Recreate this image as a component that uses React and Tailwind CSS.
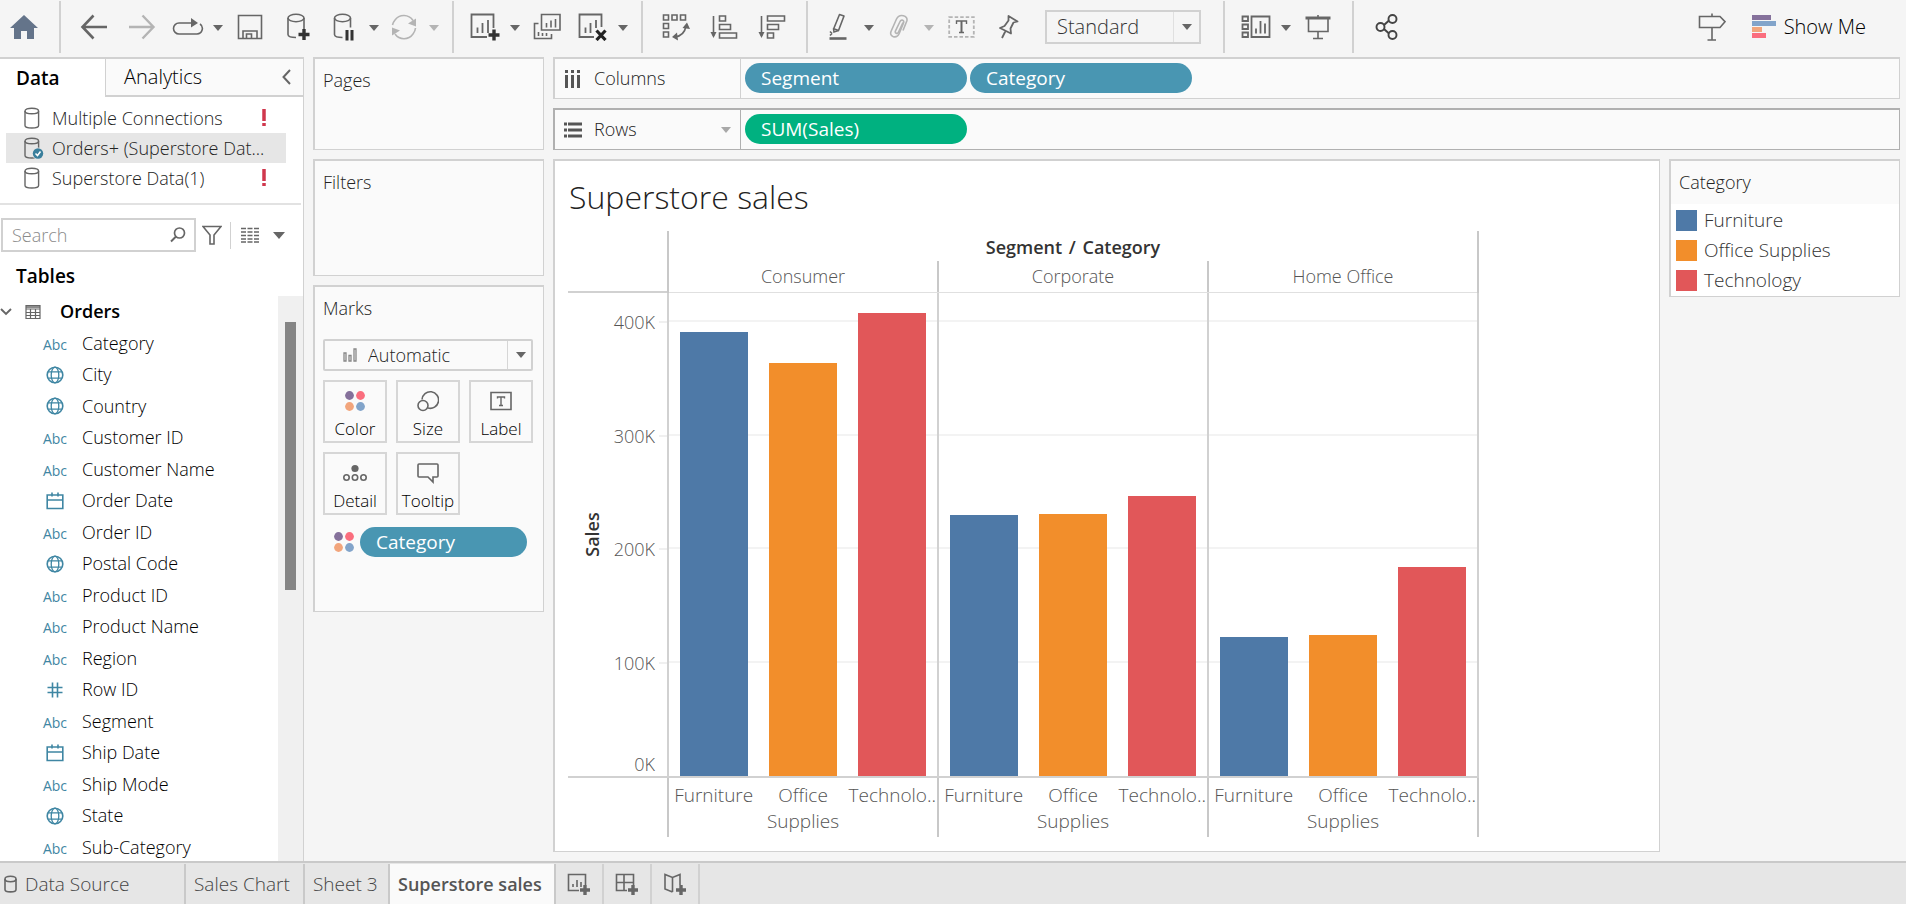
import React, { useState } from 'react'

const connections = [
  { name: 'Multiple Connections', error: true },
  { name: 'Orders+ (Superstore Dat...', active: true },
  { name: 'Superstore Data(1)', error: true },
]

const fields = [
  ['text', 'Category'],
  ['geo', 'City'],
  ['geo', 'Country'],
  ['text', 'Customer ID'],
  ['text', 'Customer Name'],
  ['date', 'Order Date'],
  ['text', 'Order ID'],
  ['geo', 'Postal Code'],
  ['text', 'Product ID'],
  ['text', 'Product Name'],
  ['text', 'Region'],
  ['number', 'Row ID'],
  ['text', 'Segment'],
  ['date', 'Ship Date'],
  ['text', 'Ship Mode'],
  ['geo', 'State'],
  ['text', 'Sub-Category'],
]

const categories = [
  { name: 'Furniture', axis: 'Furniture', color: 'bg-[#4e79a7]' },
  { name: 'Office Supplies', axis: 'Office Supplies', color: 'bg-[#f28e2b]' },
  { name: 'Technology', axis: 'Technolo..', color: 'bg-[#e15759]' },
]

// sales in thousands, same order as categories
const segments = [
  { name: 'Consumer', sales: [392, 364, 408] },
  { name: 'Corporate', sales: [230, 231, 247] },
  { name: 'Home Office', sales: [123, 124, 184] },
]

const AXIS_MAX = 426
const ticks = [400, 300, 200, 100]

const pct = (value) => `${(value / AXIS_MAX) * 100}%`

const Icon = ({ w = 28, h = 28, className = '', children }) => (
  <svg
    width={w}
    height={h}
    viewBox={`0 0 ${w} ${h}`}
    fill="none"
    stroke="currentColor"
    strokeWidth="1.6"
    className={`shrink-0 ${className}`}
    aria-hidden="true"
  >
    {children}
  </svg>
)

const Caret = ({ className = 'text-[#666]' }) => (
  <Icon w={10} h={6} className={className}>
    <path d="M0 0h10L5 6z" fill="currentColor" stroke="none" />
  </Icon>
)

const Plus = ({ x, y }) => (
  <path d={`M${x} ${y - 5.5}v11M${x - 5.5} ${y}h11`} stroke="#333" strokeWidth="3.4" />
)

const Database = ({ checked }) => (
  <Icon w={20} h={22} className="text-[#666]">
    <path d="M1 4v14.5c0 1.4 3 2.5 6.800 2.500s6.800-1.100 6.800-2.500V4" strokeWidth="1.400" />
    <ellipse cx="7.800" cy="4" rx="6.800" ry="2.800" strokeWidth="1.400" />
    {checked && (
      <>
        <circle cx="14" cy="16.500" r="6" fill="#e6e6e6" stroke="none" />
        <circle cx="14" cy="16.500" r="5.200" fill="#3a7f9c" stroke="none" />
        <path d="M11.500 16.500l2 2 3-4" stroke="#fff" strokeWidth="1.500" />
      </>
    )}
  </Icon>
)

const ColorDots = () => (
  <Icon w={20} h={20}>
    <g stroke="none">
      <circle cx="4.500" cy="4.500" r="4.400" fill="#85719b" />
      <circle cx="15.500" cy="4.500" r="4.400" fill="#fa6e7e" />
      <circle cx="4.500" cy="15.500" r="4.400" fill="#f2a57c" />
      <circle cx="15.500" cy="15.500" r="4.400" fill="#82a4ca" />
    </g>
  </Icon>
)

const Tool = ({ label, narrow, disabled, children }) => (
  <button
    type="button"
    aria-label={label}
    disabled={disabled}
    className={`flex h-full items-center justify-center ${narrow ? 'w-11' : 'w-12'} ${
      disabled ? 'text-[#b4b4b4]' : 'text-[#666]'
    }`}
  >
    {children}
  </button>
)

const Drop = ({ label, disabled }) => (
  <button type="button" aria-label={label} disabled={disabled} className="flex h-full w-4 items-center justify-center pt-[2px]">
    <Caret className={disabled ? 'text-[#b4b4b4]' : 'text-[#666]'} />
  </button>
)

const Group = ({ children, last }) => (
  <div className={`flex h-[52px] items-center pl-[9px] ${last ? '' : 'border-r-2 border-[#d1d1d1] pr-[10px]'}`}>
    {children}
  </div>
)

const Toolbar = () => (
  <header className="flex h-[57px] shrink-0 items-center bg-[#f5f5f5] pb-[3px]">
    <div className="flex h-[52px] items-center border-r-2 border-[#d1d1d1] pr-[11px]">
      <Tool label="Home">
        <Icon w={28} h={24}>
          <path d="M14 0L0 13h4v11h7v-8h6v8h7V13h4z" fill="#64748a" stroke="none" />
        </Icon>
      </Tool>
    </div>

    <Group>
      <Tool label="Undo">
        <Icon w={28} h={26}>
          <path d="M27 13H2.500M13.500 1.500L2.500 13l11 11.500" strokeWidth="2.600" />
        </Icon>
      </Tool>
      <Tool label="Redo" disabled>
        <Icon w={28} h={26}>
          <path d="M1 13h24.500M14.500 1.500l11 11.500-11 11.500" strokeWidth="2.400" />
        </Icon>
      </Tool>
      <Tool label="Replay" narrow>
        <Icon w={32} h={18}>
          <path d="M20 5H7a5.500 5.500 0 0 0 0 11h18a5.500 5.500 0 0 0 3-10" />
          <path d="M19 0l7 5-7 4.500z" fill="currentColor" stroke="none" />
        </Icon>
      </Tool>
      <Drop label="Replay options" />
      <Tool label="Save">
        <Icon w={26} h={26}>
          <path d="M1.500 1.500h23v23h-23zM6 24.500V17h14v7.500M9.500 24.500V20h5v4.500" />
        </Icon>
      </Tool>
      <Tool label="New data source">
        <Icon w={24} h={28}>
          <path d="M10 24.500c-5 0-8-1-8-3V5M18 5v11" />
          <ellipse cx="10" cy="5" rx="8" ry="3.700" />
          <Plus x={18} y={21.5} />
        </Icon>
      </Tool>
      <Tool label="Pause updates" narrow>
        <Icon w={22} h={28}>
          <path d="M9.500 24.500c-5 0-8-1-8-3V5M17.500 5v9.500" />
          <ellipse cx="9.500" cy="5" rx="8" ry="3.700" />
          <path d="M14 17v10.500M19 17v10.500" stroke="#333" strokeWidth="3" />
        </Icon>
      </Tool>
      <Drop label="Pause options" />
      <Tool label="Refresh" narrow disabled>
        <Icon w={28} h={26}>
          <path d="M5 6a11 11 0 0 1 18 0.500M23 20a11 11 0 0 1-18 0M2.500 11a12 12 0 0 1 2.500-5M25.500 14a11 11 0 0 1-2.500 6" />
          <path d="M18 9.500l8-5v8zM10 16.500l-8 5v-8z" fill="currentColor" stroke="none" />
        </Icon>
      </Tool>
      <Drop label="Refresh options" disabled />
    </Group>

    <Group>
      <Tool label="New worksheet" narrow>
        <Icon w={30} h={28}>
          <path d="M17 24H1.500V1.500h22V15M7.500 14.500V20M12.500 10v10M18 7v13" strokeWidth="1.800" />
          <Plus x={24} y={22} />
        </Icon>
      </Tool>
      <Drop label="New worksheet options" />
      <Tool label="Duplicate sheet">
        <Icon w={28} h={28}>
          <path d="M8.500 1.500h18.500v15.500H8.500zM5.500 10.500H1.500v15h17v-4.500M13.500 10v4.500M18 7.500v7M22.500 6v8.500M5.500 19v4M9.500 20v3M13.500 20v3" />
        </Icon>
      </Tool>
      <Tool label="Clear sheet" narrow>
        <Icon w={30} h={28}>
          <path d="M16 24H1.500V1.500h22V14M7.500 14.500V20M12.500 10v10M18 7v8" strokeWidth="1.800" />
          <path d="M18.500 17.500l9 9.500M27.500 17.500l-9 9.500" stroke="#222" strokeWidth="3.200" />
        </Icon>
      </Tool>
      <Drop label="Clear options" />
    </Group>

    <Group>
      <Tool label="Swap rows and columns">
        <Icon w={28} h={28}>
          <path d="M1.500 2h5v5h-5zM10 2h5v5h-5zM18.500 2h5v5h-5zM1.500 10.500h5v5h-5zM1.500 19h5v5h-5zM13 24c6.500-1 10-5 11-11" />
          <path d="M20.500 15l4.500-5.500 3 6.500zM15 19.500L10 24l6 3.500z" fill="currentColor" stroke="none" />
        </Icon>
      </Tool>
      <Tool label="Sort ascending">
        <Icon w={28} h={26}>
          <path d="M3.500 2v20M9.500 2h6v5h-6zM9.500 10.500h11v5h-11zM9.500 19h17v5h-17z" />
          <path d="M0.500 18h6l-3 6z" fill="currentColor" stroke="none" />
        </Icon>
      </Tool>
      <Tool label="Sort descending">
        <Icon w={28} h={26}>
          <path d="M3.500 2v20M9.500 2h17v5h-17zM9.500 10.500h11v5h-11zM9.500 19h6v5h-6z" />
          <path d="M0.500 18h6l-3 6z" fill="currentColor" stroke="none" />
        </Icon>
      </Tool>
    </Group>

    <Group>
      <Tool label="Highlight" narrow>
        <Icon w={20} h={28}>
          <path d="M10.500 1.500l4.500 1.500-5.500 14.500-4.800-1.800z" strokeLinejoin="round" />
          <path d="M4.500 15.500l0.500 3.500 4.500-1.500M1 18.500l2 2M1 22.500l2-2" />
          <path d="M0.500 25.500h17" strokeWidth="2.600" />
        </Icon>
      </Tool>
      <Drop label="Highlight options" />
      <Tool label="Group members" narrow disabled>
        <Icon w={20} h={26}>
          <path d="M14 8.500l-4.500 9.500c-1.200 2.500-4 1.200-3-1.200L10.800 8c1.700-3.500 5-1.500 3.500 1.500M14.300 9.500L10 20c-2.500 5-10 3-8-2.500L7.500 5c3-6 12-3.500 10.300 2L14 16.500" />
        </Icon>
      </Tool>
      <Drop label="Group options" disabled />
      <Tool label="Show mark labels">
        <Icon w={27} h={22}>
          <path d="M1.200 1.200h24.600v19.600H1.200z" stroke="#b4b4b4" strokeWidth="1.800" strokeDasharray="3.500 2" />
          <path d="M8.500 8V5h10v3M11 16.500h5" strokeWidth="1.400" />
          <path d="M13.500 5v12" strokeWidth="2" />
        </Icon>
      </Tool>
      <Tool label="Fix axes">
        <Icon w={22} h={26}>
          <path d="M10.500 2l9 5.500-4 1-3 6 0.500 5L2 14l4.500-2 4-5.500zM7.500 17L4 24" strokeWidth="1.800" strokeLinejoin="round" />
        </Icon>
      </Tool>
      <div className="relative mr-3 ml-3">
        <select
          aria-label="Fit"
          defaultValue="Standard"
          className="h-[34px] w-[156px] appearance-none border-2 border-[#d1d1d1] bg-[#f5f5f5] pl-[10px] text-[20px] text-[#333]"
        >
          <option>Standard</option>
          <option>Fit Width</option>
          <option>Fit Height</option>
          <option>Entire View</option>
        </select>
        <div className="pointer-events-none absolute inset-y-[2px] right-[2px] flex w-[26px] items-center justify-center border-l border-[#e0e0e0]">
          <Caret />
        </div>
      </div>
    </Group>

    <Group>
      <Tool label="Show or hide cards" narrow>
        <Icon w={30} h={24}>
          <path d="M1.500 1.500h5.500v4.500H1.500zM1.500 9.500h5.500v4.500H1.500zM1.500 17.500h5.500v4.500H1.500zM10.500 1.500h18v20.500h-18zM15 13.500v5M19.500 6v12.500M24 8.500v10" strokeWidth="1.800" />
        </Icon>
      </Tool>
      <Drop label="Card options" />
      <Tool label="Presentation mode">
        <Icon w={26} h={26}>
          <path d="M0.500 4h25" strokeWidth="3" />
          <path d="M3.500 5v12.500h19.500V5M13 1v2M13 17.500V24M8 24.500h10" />
        </Icon>
      </Tool>
    </Group>

    <Group last>
      <Tool label="Share">
        <Icon w={24} h={26} className="text-[#444]">
          <path d="M9 11l5-4.500M9 15l5 4.500" strokeWidth="2" />
          <circle cx="5.500" cy="13" r="4" strokeWidth="1.900" />
          <circle cx="17.500" cy="5" r="4" strokeWidth="1.900" />
          <circle cx="17.500" cy="21" r="4" strokeWidth="1.900" />
        </Icon>
      </Tool>
    </Group>

    <div className="ml-auto flex h-full items-center pr-10">
      <Tool label="Guide">
        <Icon w={28} h={28}>
          <path d="M1.500 3.500h20.500l5 5.200-5 5.800H1.500zM14 0.500v3M14 14.500V27M9.500 27h8.500" />
        </Icon>
      </Tool>
      <button type="button" className="flex items-center gap-2 pl-4 text-[20px] text-black">
        <Icon w={24} h={24}>
          <g stroke="none">
            <path d="M0 0h19v5H0z" fill="#85719b" />
            <path d="M0 6h24v5H0z" fill="#82a4ca" />
            <path d="M0 12h10v5H0z" fill="#f2a57c" />
            <path d="M0 18h14v5H0z" fill="#fa6e7e" />
          </g>
        </Icon>
        Show Me
      </button>
    </div>
  </header>
)

const FieldIcon = ({ type }) => {
  if (type === 'text') return <span className="pt-[2px] text-[14px] font-medium">Abc</span>
  if (type === 'geo') {
    return (
      <Icon w={18} h={18}>
        <circle cx="9" cy="9" r="7.800" />
        <ellipse cx="9" cy="9" rx="3.800" ry="7.800" strokeWidth="1.300" />
        <path d="M2 5.800h14M2 12.200h14" strokeWidth="1.300" />
      </Icon>
    )
  }
  if (type === 'date') {
    return (
      <Icon w={18} h={18}>
        <path d="M1.200 3h15.600v13.500H1.200zM1.200 8h15.600M6 0.500v4M12 0.500v4" />
      </Icon>
    )
  }
  return (
    <Icon w={18} h={18}>
      <path d="M6.500 1.500v15M11.500 1.500v15M1.500 6.500h15M1.500 11.500h15" />
    </Icon>
  )
}

const DataPane = () => {
  const [search, setSearch] = useState('')

  return (
    <aside className="flex w-[304px] shrink-0 flex-col border-t-2 border-r border-[#d1d1d1] bg-white">
      <div className="flex h-[38px] shrink-0">
        <button type="button" className="w-[105px] pl-4 text-left text-[19px] font-semibold text-black">
          Data
        </button>
        <div className="flex flex-1 items-center justify-between border-b-2 border-l border-[#d1d1d1] bg-[#fafafa] pr-3 pl-[18px]">
          <button type="button" className="text-[20px] text-black">Analytics</button>
          <button type="button" aria-label="Collapse pane" className="text-[#666]">
            <Icon w={9} h={16}>
              <path d="M8 1L1.500 8 8 15" strokeWidth="2" />
            </Icon>
          </button>
        </div>
      </div>

      <ul className="mr-[17px] ml-[6px] shrink-0 py-[6px] text-[18px] leading-[30px] text-[#222]">
        {connections.map((c) => (
          <li key={c.name} className={`flex items-center pl-[18px] whitespace-nowrap ${c.active ? 'bg-[#e6e6e6]' : ''}`}>
            <Database checked={c.active} />
            <span className="ml-2">{c.name}</span>
            {c.error && (
              <Icon w={4} h={18} className="mr-5 ml-auto text-[#d0374d]">
                <path d="M2 0v12M2 14v3" strokeWidth="3.500" />
              </Icon>
            )}
          </li>
        ))}
      </ul>

      <div className="mt-1 mr-[2px] border-t-2 border-[#e2e2e2]" />

      <div className="mt-[13px] flex h-[34px] shrink-0 items-center pl-px">
        <div className="flex h-full w-[195px] items-center border-2 border-[#d1d1d1] pr-2 pl-[9px]">
          <input
            type="text"
            aria-label="Search"
            placeholder="Search"
            value={search}
            onChange={(e) => setSearch(e.target.value)}
            className="min-w-0 flex-1 text-[18px] outline-none placeholder:text-[#8a8a8a]"
          />
          <Icon w={16} h={16} className="text-[#666]">
            <circle cx="9.500" cy="6" r="5" strokeWidth="1.700" />
            <path d="M6 9.500L1 14.500" strokeWidth="1.900" />
          </Icon>
        </div>
        <button type="button" aria-label="Filter fields" className="mr-2 ml-[6px] text-[#666]">
          <Icon w={20} h={20}>
            <path d="M1 1.500h18l-7 8.500v9H8V10z" />
          </Icon>
        </button>
        <button type="button" aria-label="View options" className="flex h-[27px] items-center gap-[14px] border-l border-[#d1d1d1] pl-[10px] text-[#666]">
          <Icon w={18} h={16}>
            <path d="M0 1.500h18M0 5h18M0 8.500h18M0 12h18M0 15h18" strokeWidth="1.600" strokeDasharray="5 1.500" />
          </Icon>
          <Icon w={12} h={7}>
            <path d="M0 0h12L6 7z" fill="currentColor" stroke="none" />
          </Icon>
        </button>
      </div>

      <h2 className="mt-[11px] h-[33px] shrink-0 pl-4 text-[19px] leading-[26px] font-semibold text-black">Tables</h2>

      <div className="flex min-h-0 flex-1 overflow-hidden">
        <div className="flex-1">
          <div className="flex h-[31px] items-center text-[18px] font-semibold text-black">
            <Icon w={12} h={8} className="text-[#666]">
              <path d="M1 1l5 5 5-5" strokeWidth="1.900" />
            </Icon>
            <Icon w={16} h={16} className="mr-[19px] ml-[13px] text-[#666]">
              <path d="M1 1.500h14v13H1zM1 5h14M1 8.500h14M1 11.500h14M5.500 5v9.500M10.500 5v9.500" strokeWidth="1.200" />
              <path d="M1 3h14" strokeWidth="1.500" />
            </Icon>
            Orders
          </div>
          <ul>
            {fields.map(([type, name]) => (
              <li key={name} className="flex h-8 items-center pl-[43px] text-[18px] text-black even:h-[31px]">
                <span className="flex w-6 justify-center text-[#3f86a3]">
                  <FieldIcon type={type} />
                </span>
                <span className="pl-[15px]">{name}</span>
              </li>
            ))}
          </ul>
        </div>
        <div className="w-[25px] bg-[#f0f0f0]">
          <div className="mx-[7px] mt-[26px] h-[268px] bg-[#858585]" />
        </div>
      </div>
    </aside>
  )
}

const Card = ({ title, className = '', children }) => (
  <section className={`border border-t-2 border-l-2 border-[#d1d1d1] bg-[#fafafa] px-2 ${className}`}>
    <h2 className="pt-2 text-[18px] leading-[26px] text-[#222]">{title}</h2>
    {children}
  </section>
)

const MarkButton = ({ label, children }) => (
  <button
    type="button"
    className="flex h-[63px] flex-col items-center justify-between border-2 border-[#d6d6d6] pt-2 text-[17px] leading-[25px] text-black"
  >
    <span className="flex h-[22px] items-center text-[#666]">{children}</span>
    {label}
  </button>
)

const Cards = () => (
  <div className="flex w-[231px] shrink-0 flex-col gap-[9px]">
    <Card title="Pages" className="h-[93px]" />
    <Card title="Filters" className="h-[117px]" />
    <Card title="Marks" className="h-[327px]">
      <div className="relative mt-[18px]">
        <select
          aria-label="Mark type"
          className="h-8 w-[210px] appearance-none rounded-xs border-2 border-[#d1d1d1] bg-[#fafafa] pl-[43px] text-[18px] text-[#222]"
        >
          <option>Automatic</option>
          <option>Bar</option>
          <option>Line</option>
        </select>
        <div className="pointer-events-none absolute inset-y-0 left-5 flex items-center text-[#888]">
          <Icon w={14} h={14}>
            <path d="M1 5h2v8H1zM6 7.500h2V13H6zM11 1h2v12h-2z" strokeWidth="1.300" />
          </Icon>
        </div>
        <div className="pointer-events-none absolute inset-y-[2px] right-[2px] flex w-[26px] items-center justify-center border-l border-[#d6d6d6]">
          <Caret />
        </div>
      </div>
      <div className="mt-[9px] grid w-[210px] grid-cols-3 gap-[9px]">
        <MarkButton label="Color">
          <ColorDots />
        </MarkButton>
        <MarkButton label="Size">
          <Icon w={22} h={22}>
            <path d="M5 9.500a8.300 8.300 0 1 1 6 8.500" />
            <circle cx="6" cy="15.500" r="5" />
          </Icon>
        </MarkButton>
        <MarkButton label="Label">
          <Icon w={22} h={20}>
            <path d="M1 1.500h20v17H1z" />
            <path d="M7.500 7.500V6h7v1.500M11 6v8M9 14.500h4" strokeWidth="1.400" />
          </Icon>
        </MarkButton>
        <MarkButton label="Detail">
          <Icon w={24} h={18}>
            <circle cx="12" cy="4.500" r="3.600" fill="currentColor" stroke="none" />
            <circle cx="3.500" cy="13.500" r="2.700" />
            <circle cx="12" cy="13.500" r="2.700" />
            <circle cx="20.500" cy="13.500" r="2.700" />
          </Icon>
        </MarkButton>
        <MarkButton label="Tooltip">
          <Icon w={22} h={22}>
            <path d="M2 2h18a1 1 0 0 1 1 1v11a1 1 0 0 1-1 1h-4v5l-5-5H2a1 1 0 0 1-1-1V3a1 1 0 0 1 1-1z" />
          </Icon>
        </MarkButton>
      </div>
      <div className="mt-3 flex items-center gap-[6px] pl-[11px]">
        <ColorDots />
        <Pill label="Category" className="w-[167px] bg-[#4996b2]" />
      </div>
    </Card>
  </div>
)

const Pill = ({ label, className }) => (
  <button type="button" className={`h-[30px] rounded-full px-4 text-left text-[19px] leading-[28px] font-medium text-white ${className}`}>
    {label}
  </button>
)

const Shelf = ({ label, icon, active, children }) => (
  <div className={`flex h-[42px] border border-t-2 border-l-2 bg-[#fafafa] ${active ? 'border-[#b0b0b0]' : 'border-[#d1d1d1]'}`}>
    <div className={`flex w-[186px] items-center gap-3 border-r pl-[9px] text-[18px] text-[#222] ${active ? 'border-[#b0b0b0]' : 'border-[#d1d1d1]'}`}>
      {icon}
      {label}
      {active && (
        <span className="mr-[9px] ml-auto">
          <Caret className="text-[#a8a8a8]" />
        </span>
      )}
    </div>
    <div className="flex items-start gap-[3px] pt-1 pl-1">{children}</div>
  </div>
)

const Chart = () => (
  <section className="flex min-w-0 flex-1 flex-col border border-t-2 border-l-2 border-[#d1d1d1] bg-white pl-[13px]">
    <h1 className="h-[70px] shrink-0 pt-4 pl-px text-[32px] leading-[40px] font-light text-[#222]">Superstore sales</h1>

    <div className="flex shrink-0">
      <div className="w-[99px] border-b-2 border-[#d1d1d1]" />
      <div className="border-x-2 border-[#c8c8c8] text-center">
        <div className="h-[30px] text-[18px] leading-[32px] font-semibold text-[#333]">
          Segment <span className="mx-[2px]">/</span> Category
        </div>
        <div className="flex divide-x-2 divide-[#c8c8c8] border-b border-[#e0e0e0] text-[18px] leading-[31px] text-[#555]">
          {segments.map((s) => (
            <div key={s.name} className="w-[268px] shrink-0 box-content">{s.name}</div>
          ))}
        </div>
      </div>
    </div>

    <div className="flex min-h-0 flex-1">
      <div className="flex w-[99px] border-b-2 border-[#d1d1d1]">
        <div className="flex w-12 items-center justify-center">
          <span className="-rotate-90 text-[18px] font-semibold text-[#333]">Sales</span>
        </div>
        <div className="relative flex-1 text-right text-[18px] leading-[24px] text-[#555]">
          {ticks.map((t) => (
            <div key={t} className="absolute right-0 flex translate-y-1/2 items-center gap-1" style={{ bottom: pct(t) }}>
              {t}K
              <span className="h-[2px] w-2 bg-[#f0f0f0]" />
            </div>
          ))}
          <div className="absolute right-3 bottom-0">0K</div>
        </div>
      </div>
      <div className="flex divide-x-2 divide-[#d1d1d1] border-x-2 border-b-2 border-[#d1d1d1]">
        {segments.map((s) => (
          <div key={s.name} className="relative box-content flex w-[268px] items-end">
            {ticks.map((t) => (
              <div key={t} className="absolute inset-x-0 border-t-2 border-[#f3f3f3]" style={{ bottom: pct(t) }} />
            ))}
            {s.sales.map((value, i) => (
              <div key={categories[i].name} className="relative flex h-full flex-1 items-end justify-center">
                <div className={`w-[68px] ${categories[i].color}`} style={{ height: pct(value) }} />
              </div>
            ))}
          </div>
        ))}
      </div>
    </div>

    <div className="mb-[14px] flex h-[59px] shrink-0 pl-[99px]">
      <div className="flex divide-x-2 divide-[#c8c8c8] border-x-2 border-[#c8c8c8]">
        {segments.map((s) => (
          <div key={s.name} className="box-content flex w-[268px] pt-1 text-center text-[19px] leading-[26px] text-[#555]">
            {categories.map((c) => (
              <div key={c.name} className="w-0 flex-1">{c.axis}</div>
            ))}
          </div>
        ))}
      </div>
    </div>
  </section>
)

const Legend = () => (
  <section className="w-[231px] shrink-0 self-start border border-t-2 border-l-2 border-[#d1d1d1] bg-white">
    <h2 className="bg-[#fafafa] py-2 pl-2 text-[18px] leading-[27px] text-[#222]">Category</h2>
    <ul className="pt-px pb-px pl-[5px] text-[19px] leading-[30px] text-[#333]">
      {categories.map((c) => (
        <li key={c.name} className="flex items-center gap-[7px]">
          <span className={`size-[21px] ${c.color}`} />
          {c.name}
        </li>
      ))}
    </ul>
  </section>
)

const sheetTab = 'flex items-center border-r-2 border-[#c9c9c9] px-2 whitespace-nowrap'

const SheetTabs = () => (
  <footer className="flex h-[43px] shrink-0 border-t-2 border-[#c9c9c9] bg-[#e6e6e6] pt-px text-[19px] text-[#444]">
    <button type="button" className="flex w-[186px] items-center gap-2 border-r-2 border-[#c9c9c9] pl-1">
      <Icon w={13} h={18} className="text-[#666]">
        <path d="M1 4v10.500c0 1.400 2.500 2.400 5.500 2.400s5.500-1 5.500-2.400V4" />
        <ellipse cx="6.500" cy="4" rx="5.500" ry="2.700" />
      </Icon>
      Data Source
    </button>
    <button type="button" className={`${sheetTab} w-[119px]`}>Sales Chart</button>
    <button type="button" className={`${sheetTab} w-[85px]`}>Sheet 3</button>
    <button type="button" className={`${sheetTab} w-[166px] bg-[#fafafa] text-[18px] font-semibold text-[#555]`}>
      Superstore sales
    </button>
    <button type="button" aria-label="New worksheet" className="flex w-12 items-center justify-center border-r-2 border-[#d1d1d1] text-[#666]">
      <Icon w={24} h={22}>
        <path d="M12 17.500H1.500V1.500h17V12M6 11v3M10 7v7M14 9v5" />
        <path d="M18 12v10M13 17h10" strokeWidth="3.400" />
      </Icon>
    </button>
    <button type="button" aria-label="New dashboard" className="flex w-12 items-center justify-center border-r-2 border-[#d1d1d1] text-[#666]">
      <Icon w={24} h={22}>
        <path d="M12 17.500H1.500V1.500h17V12M1.500 9.500h17M9 1.500v16" />
        <path d="M18 12v10M13 17h10" strokeWidth="3.400" />
      </Icon>
    </button>
    <button type="button" aria-label="New story" className="flex w-12 items-center justify-center border-r-2 border-[#d1d1d1] text-[#666]">
      <Icon w={24} h={22}>
        <path d="M9.500 19l-7.500-3V1.500l7.500 3 7.500-3V12M9.500 4.500V19" />
        <path d="M18 12v10M13 17h10" strokeWidth="3.400" />
      </Icon>
    </button>
  </footer>
)

const App = () => (
  <div className="flex h-screen flex-col overflow-hidden bg-[#f5f5f5] font-['Open_Sans',sans-serif] font-light">
    <Toolbar />
    <div className="flex min-h-0 flex-1">
      <DataPane />
      <div className="flex min-w-0 flex-1 gap-[9px] pr-[6px] pl-[9px]">
        <Cards />
        <main className="flex min-w-0 flex-1 flex-col gap-[9px] pb-[9px]">
          <Shelf
            label="Columns"
            icon={
              <Icon w={18} h={20} className="text-[#555]">
                <path d="M2.500 6v13M8.500 6v13M14.500 6v13M2.500 1v3M8.500 1v3M14.500 1v3" strokeWidth="3" />
              </Icon>
            }
          >
            <Pill label="Segment" className="w-[222px] bg-[#4996b2]" />
            <Pill label="Category" className="w-[222px] bg-[#4996b2]" />
          </Shelf>
          <Shelf
            label="Rows"
            active
            icon={
              <Icon w={18} h={16} className="text-[#555]">
                <path d="M0 2h3M4 2h14M0 8h3M4 8h14M0 14h3M4 14h14" strokeWidth="2.800" />
              </Icon>
            }
          >
            <Pill label="SUM(Sales)" className="w-[222px] bg-[#00b180]" />
          </Shelf>
          <div className="flex min-h-0 flex-1 gap-[9px]">
            <Chart />
            <Legend />
          </div>
        </main>
      </div>
    </div>
    <SheetTabs />
  </div>
)

export default App
